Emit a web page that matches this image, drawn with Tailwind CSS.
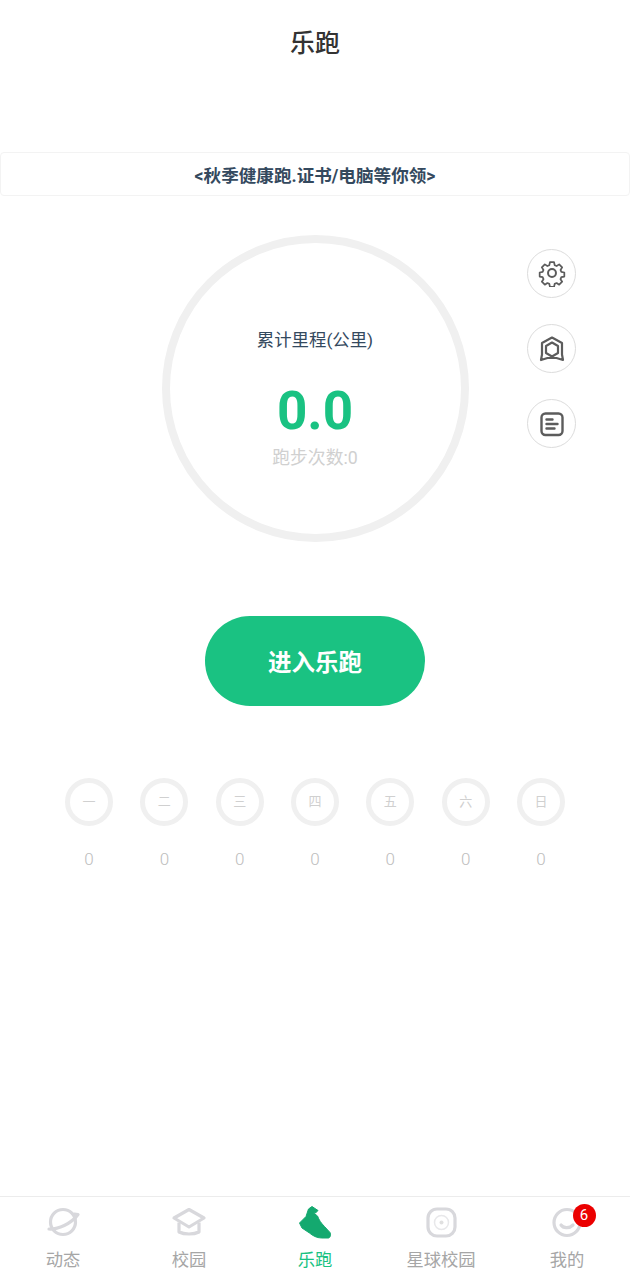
<!DOCTYPE html>
<html lang="zh-CN">
<head>
  <meta charset="UTF-8" />
  <meta name="viewport" content="width=device-width, initial-scale=1" />
  <title>乐跑</title>
  <script src="https://cdn.jsdelivr.net/npm/@tailwindcss/browser@4"></script>
</head>
<body class="bg-white font-['Roboto','Noto_Sans_CJK_SC',sans-serif]">
  <div class="w-[630px] h-[1280px] flex flex-col overflow-hidden">
    <!-- 标题 -->
    <header class="h-[152px] pt-[26px] text-center text-[25px] leading-[36px] font-medium text-[#333]">乐跑</header>

    <!-- 公告 -->
    <div class="h-[44px] pt-[4px] border border-[#f3f3f3] rounded-[4px] flex items-center justify-center text-[17.6px] font-bold text-[#34495e]">&lt;秋季健康跑.证书/电脑等你领&gt;</div>

    <!-- 里程 -->
    <section class="relative h-[346px] pt-[39px] flex justify-center">
      <div class="w-[307px] h-[307px] rounded-full border-[8px] border-[#f0f0f0] flex flex-col items-center">
        <div class="mt-[84px] text-[17.4px] leading-[26px] text-[#34495e]">累计里程(公里)</div>
        <div class="mt-[28px] text-[53px] leading-[60px] font-bold text-[#1ac282]">0.0</div>
        <div class="mt-[4px] text-[17.8px] leading-[26px] text-[#d0d0d0]">跑步次数:0</div>
      </div>
      <div class="absolute left-[527px] top-[53px] flex flex-col gap-[26px]">
        <div class="w-[49px] h-[49px] rounded-full border border-[#dcdcdc] flex items-center justify-center">
          <svg class="w-[28px] h-[28px] -mt-[1px]" viewBox="0 0 24 24" fill="none" stroke="#5c5c5c" stroke-width="1.700" stroke-linejoin="round"><circle cx="12" cy="12" r="3.400"/><path d="M10 1.500h4l.6 2.900 1.900.8 2.500-1.600 2.900 2.900-1.600 2.500.8 1.900 2.900.6v4l-2.900.6-.8 1.900 1.600 2.500-2.900 2.900-2.500-1.600-1.900.8-.6 2.900h-4l-.6-2.900-1.900-.8-2.500 1.600-2.900-2.900 1.600-2.500-.8-1.900-2.900-.6v-4l2.900-.6.8-1.900-1.600-2.500 2.900-2.900 2.500 1.600 1.900-.8z" transform="translate(12 12) scale(.88) translate(-12 -12)"/></svg>
        </div>
        <div class="w-[49px] h-[49px] rounded-full border border-[#dcdcdc] flex items-center justify-center">
          <svg class="w-[28px] h-[28px]" viewBox="0 0 28 28" fill="none" stroke="#5c5c5c" stroke-width="2.200" stroke-linejoin="round"><path d="M14 2.500l10 5.500v11.500L25 25l-6.500-2h-9L3 25l1-5.500V8z"/><path d="M14 7.500l6 3.500v7l-6 3.500-6-3.500v-7z"/></svg>
        </div>
        <div class="w-[49px] h-[49px] rounded-full border border-[#dcdcdc] flex items-center justify-center">
          <svg class="w-[26px] h-[26px]" viewBox="0 0 26 26" fill="none" stroke="#5c5c5c" stroke-width="2.400" stroke-linecap="round"><rect x="2.500" y="2.500" width="21" height="21.500" rx="4"/><path d="M7.500 8.500h6M7.500 13h11M7.500 17.500h8"/></svg>
        </div>
      </div>
    </section>

    <!-- 按钮 -->
    <div class="mt-[74px] flex justify-center">
      <button class="w-[220px] h-[90px] pt-[5px] rounded-[45px] bg-[#1ac282] text-white text-[23.5px] font-bold">进入乐跑</button>
    </div>

    <!-- 星期 -->
    <div class="mt-[72px] flex justify-center gap-[27.330px]">
      <div class="w-[48px] flex flex-col items-center"><div class="w-[48px] h-[48px] rounded-full border-[5px] border-[#f0f0f0] flex items-center justify-center text-[13px] text-[#d0d0d0]">一</div><div class="mt-[23px] text-[17px] leading-[20px] font-light text-[#bdbdbd]">0</div></div>
      <div class="w-[48px] flex flex-col items-center"><div class="w-[48px] h-[48px] rounded-full border-[5px] border-[#f0f0f0] flex items-center justify-center text-[13px] text-[#d0d0d0]">二</div><div class="mt-[23px] text-[17px] leading-[20px] font-light text-[#bdbdbd]">0</div></div>
      <div class="w-[48px] flex flex-col items-center"><div class="w-[48px] h-[48px] rounded-full border-[5px] border-[#f0f0f0] flex items-center justify-center text-[13px] text-[#d0d0d0]">三</div><div class="mt-[23px] text-[17px] leading-[20px] font-light text-[#bdbdbd]">0</div></div>
      <div class="w-[48px] flex flex-col items-center"><div class="w-[48px] h-[48px] rounded-full border-[5px] border-[#f0f0f0] flex items-center justify-center text-[13px] text-[#d0d0d0]">四</div><div class="mt-[23px] text-[17px] leading-[20px] font-light text-[#bdbdbd]">0</div></div>
      <div class="w-[48px] flex flex-col items-center"><div class="w-[48px] h-[48px] rounded-full border-[5px] border-[#f0f0f0] flex items-center justify-center text-[13px] text-[#d0d0d0]">五</div><div class="mt-[23px] text-[17px] leading-[20px] font-light text-[#bdbdbd]">0</div></div>
      <div class="w-[48px] flex flex-col items-center"><div class="w-[48px] h-[48px] rounded-full border-[5px] border-[#f0f0f0] flex items-center justify-center text-[13px] text-[#d0d0d0]">六</div><div class="mt-[23px] text-[17px] leading-[20px] font-light text-[#bdbdbd]">0</div></div>
      <div class="w-[48px] flex flex-col items-center"><div class="w-[48px] h-[48px] rounded-full border-[5px] border-[#f0f0f0] flex items-center justify-center text-[13px] text-[#d0d0d0]">日</div><div class="mt-[23px] text-[17px] leading-[20px] font-light text-[#bdbdbd]">0</div></div>
    </div>

    <!-- 底部导航 -->
    <nav class="mt-auto h-[84px] border-t border-[#ececec] grid grid-cols-5 text-[17.3px] leading-[26px] text-[#a6a6a6] text-center">
      <div class="flex flex-col items-center pt-[8px]">
        <svg class="w-[36px] h-[36px]" viewBox="0 0 36 36" fill="none" stroke="#d8d8dc" stroke-width="3.200" stroke-linecap="round" stroke-linejoin="round"><circle cx="18" cy="17" r="12.500"/><path d="M4 24c9 .5 22-5 29-14.500l-3.500-.5"/></svg>
        <div class="mt-[6px]">动态</div>
      </div>
      <div class="flex flex-col items-center pt-[8px]">
        <svg class="w-[36px] h-[36px]" viewBox="0 0 36 36" fill="none" stroke="#d8d8dc" stroke-width="3.200" stroke-linejoin="round"><path d="M18 4.500L33 13 18 22 3 13z"/><path d="M8 17.500V27c3 1.500 6 2 10 2s7-.5 10-2v-9.500"/></svg>
        <div class="mt-[6px]">校园</div>
      </div>
      <div class="flex flex-col items-center pt-[8px] text-[#1ac282]">
        <svg class="w-[36px] h-[36px]" viewBox="0 0 36 36"><path d="M11.500 4l3.500-2.500 6 4-2.500 2.500-2.500-.5 4.500 3.500c1.500 4 3.500 7 7 10.500l5.500 6c1 2 .5 5-1.500 5.500h-7c-5 0-9-2.500-12-5l-7.500-5-2.500-5 6.500-6.500z" fill="#14a96f" stroke="#14a96f" stroke-width="1" stroke-linejoin="round"/></svg>
        <div class="mt-[6px]">乐跑</div>
      </div>
      <div class="flex flex-col items-center pt-[8px]">
        <svg class="w-[36px] h-[36px]" viewBox="0 0 36 36" fill="none"><rect x="5" y="4" width="27" height="27" rx="9" stroke="#d8d8dc" stroke-width="3.200"/><circle cx="18.500" cy="17.500" r="7" stroke="#e8e8ea" stroke-width="1.500"/><circle cx="18.500" cy="17.500" r="2" fill="#e0e0e0"/></svg>
        <div class="mt-[6px] whitespace-nowrap">星球校园</div>
      </div>
      <div class="relative flex flex-col items-center pt-[8px]">
        <svg class="w-[36px] h-[36px]" viewBox="0 0 36 36" fill="none" stroke="#d8d8dc" stroke-width="3.200" stroke-linecap="round"><circle cx="18" cy="17.500" r="13"/><path d="M12 20c2 3 8 4 12 0"/></svg>
        <div class="mt-[6px]">我的</div>
        <span class="absolute left-[68.500px] top-[7px] w-[23px] h-[23px] rounded-full bg-[#eb0000] text-white text-[15px] leading-[23px]">6</span>
      </div>
    </nav>
  </div>
</body>
</html>
